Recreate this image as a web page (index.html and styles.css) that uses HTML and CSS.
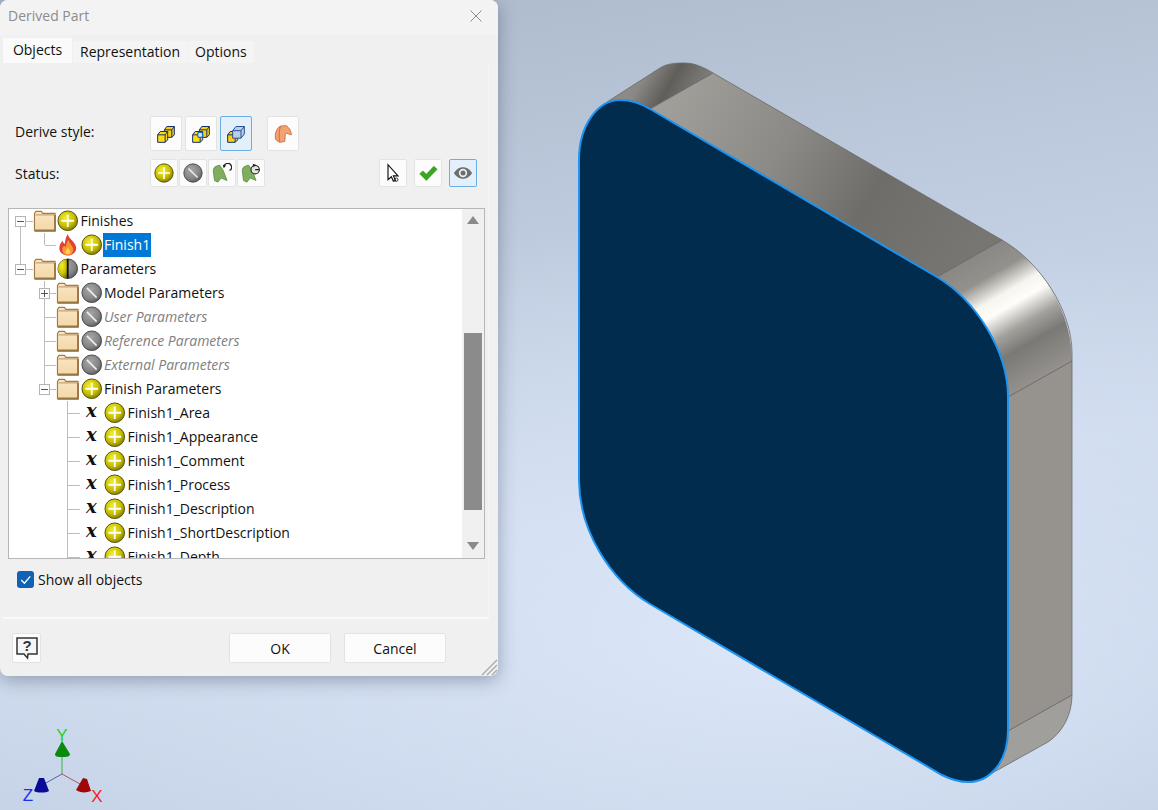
FILE: index.html
```html
<!DOCTYPE html>
<html lang="en">
<head>
<meta charset="utf-8">
<title>Derived Part</title>
<link rel="stylesheet" href="styles.css">
</head>
<body>
<svg class="defs" aria-hidden="true">
  <defs>
    <radialGradient id="gy" cx=".4" cy=".35" r=".75"><stop offset="0" stop-color="#f4ee30"/><stop offset=".55" stop-color="#c9c000"/><stop offset="1" stop-color="#6f6a00"/></radialGradient>
    <radialGradient id="gg" cx=".4" cy=".35" r=".75"><stop offset="0" stop-color="#a8a8a8"/><stop offset=".6" stop-color="#858585"/><stop offset="1" stop-color="#505050"/></radialGradient>
    <linearGradient id="fold" x1="0" y1="0" x2="0" y2="1"><stop offset="0" stop-color="#fae6c4"/><stop offset="1" stop-color="#f3d8a8"/></linearGradient>
    <symbol id="folder" viewBox="0 0 24 24">
      <path d="M1.5 21.5V4.5L3 2.5H8.5L10 4.5H22.5V21.5Z" fill="url(#fold)" stroke="#a57c48" stroke-width="1.2"/>
      <path d="M1.5 22.5H22.5V6" fill="none" stroke="#8f6836" stroke-width="1.5"/>
      <path d="M2.5 6H22" stroke="#b8925e" stroke-width="1"/>
    </symbol>
    <symbol id="plus" viewBox="0 0 24 24">
      <circle cx="12" cy="12" r="10" fill="url(#gy)" stroke="#55520a" stroke-width="1"/>
      <path d="M12 5.5V18.5M5.5 12H18.5" stroke="#fff" stroke-width="1.8"/>
    </symbol>
    <symbol id="none" viewBox="0 0 24 24">
      <circle cx="12" cy="12" r="10" fill="url(#gg)" stroke="#4a4a4a" stroke-width="1"/>
      <path d="M7 7L17 17" stroke="#eee" stroke-width="1.6"/>
    </symbol>
    <symbol id="half" viewBox="0 0 24 24">
      <circle cx="12" cy="12" r="10" fill="url(#gg)" stroke="#4a4a4a" stroke-width="1"/>
      <path d="M12 2A10 10 0 0 0 12 22Z" fill="url(#gy)"/>
      <path d="M12 2V22" stroke="#111" stroke-width="1.8"/>
    </symbol>
    <symbol id="flame" viewBox="0 0 24 24">
      <path d="M12 1C13 6 19 8 20.500 14C21.500 19 17 23 12 23C7 23 2.500 19 3.500 14C4 11 5.500 10 6.500 8C7.500 10 8 11 9 11C9.500 7 10 4 12 1Z" fill="#e0433a"/>
      <path d="M12.500 7C13.500 11 17.500 13 17.500 17C17.500 20.500 15 22.500 12 22.500C9 22.500 6.500 20.500 6.500 17C6.500 15 7.500 14 8.500 13C9 14 9.500 14.500 10 14.500C10.500 12 11 9.500 12.500 7Z" fill="#fb9a2c"/>
      <path d="M12 15C13 17 15 18 14.500 20C14 22 10 22 9.500 20C9.300 18.500 11 17 12 15Z" fill="#fdd060"/>
    </symbol>
    <symbol id="bent" viewBox="0 0 24 24">
      <path d="M3 21L1.500 9C1.500 7 3 4.500 5 4L9 2.500L13.500 9L18 21L11 18L7 23Z" fill="#7fae5f" stroke="#5f8c48" stroke-width="1"/>
    </symbol>
  </defs>
</svg>

<svg class="scene" viewBox="0 0 1158 810" aria-hidden="true">
  <defs>
    <linearGradient id="sTL" gradientUnits="userSpaceOnUse" x1="612" y1="80" x2="712" y2="138">
      <stop offset="0" stop-color="#908e89"/><stop offset=".22" stop-color="#8b8985"/><stop offset=".45" stop-color="#5f5e5b"/><stop offset=".75" stop-color="#84827e"/><stop offset="1" stop-color="#8b8985"/>
    </linearGradient>
    <linearGradient id="sTop" gradientUnits="userSpaceOnUse" x1="680" y1="90" x2="970" y2="258">
      <stop offset="0" stop-color="#a09e99"/><stop offset=".35" stop-color="#8c8a86"/><stop offset=".65" stop-color="#6f6d69"/><stop offset="1" stop-color="#787673"/>
    </linearGradient>
    <linearGradient id="sTR" gradientUnits="userSpaceOnUse" x1="970" y1="258" x2="1040" y2="379">
      <stop offset="0" stop-color="#8a8884"/><stop offset=".18" stop-color="#93918c"/><stop offset=".34" stop-color="#f7f5f0"/><stop offset=".44" stop-color="#fffdf9"/><stop offset=".6" stop-color="#a3a19c"/><stop offset=".74" stop-color="#7b7975"/><stop offset="1" stop-color="#95928e"/>
    </linearGradient>
  </defs>
  <path d="M607 102L660 68C668 63 677 63 685 63C695 63 705 68 713 73L650 109C636 100 620 97 607 102Z" fill="url(#sTL)"/>
  <path d="M650 109L713 73L1002 240L937 277Z" fill="url(#sTop)"/>
  <path d="M937 277L1002 240C1040 262 1072 310 1072 361L1008 397C1008 350 975 300 937 277Z" fill="url(#sTR)"/>
  <path d="M1008 397L1072 361V695L1008 731Z" fill="#96938f"/>
  <path d="M1008 731L1072 695C1072 715 1062 733 1048 742L985 777C1000 770 1008 750 1008 731Z" fill="#a19f9b"/>
  <path d="M607 102L660 68C668 63 677 63 685 63C695 63 705 68 713 73L1002 240C1040 262 1072 310 1072 353V695C1072 715 1062 733 1048 742L985 777" fill="none" stroke="#6a6966" stroke-width=".8"/>
  <path d="M650 109L713 73M937 277L1002 240M1008 397L1072 361M1008 731L1072 695" stroke="#656462" stroke-width=".9"/>
  <path d="M579 160C579 125 598 100 620 100C632 100 642 104 650 109L937 277C975 300 1008 350 1008 397V730C1008 762 990 782 968 782C958 782 950 779 942 775L650 604C610 580 579 530 579 480Z" fill="#012c4e" stroke="#1b94f2" stroke-width="2"/>
  <path d="M62 774V752" stroke="#3fae4a" stroke-width="1"/>
  <path d="M62 774L44 784" stroke="#5560b0" stroke-width="1"/>
  <path d="M62 774L80 784" stroke="#b05560" stroke-width="1"/>
  <path d="M62 741L70 754C70 757 66 757 62 757C58 757 55 757 55 754Z" fill="#0a8a0a"/>
  <path d="M39 778L44 778L49 791C46 793 37 793 34 791Z" fill="#0a0a96"/>
  <path d="M83 778L87 779L91 791C86 793 80 793 76 790Z" fill="#a00808"/>
  <text class="axis ax-y" x="62" y="741">Y</text>
  <text class="axis ax-z" x="28" y="801">Z</text>
  <text class="axis ax-x" x="97" y="802">X</text>
</svg>

<section class="dialog">
  <header class="titlebar">
    <h1 class="title">Derived Part</h1>
    <svg class="close" viewBox="0 0 12 12" aria-hidden="true"><path d="M.5 .5L11.500 11.500M11.500 .5L.5 11.500" stroke="#8a8a8a" stroke-width="1"/></svg>
  </header>
  <nav class="tabs">
    <span class="tab active">Objects</span>
    <span class="tab">Representation</span>
    <span class="tab">Options</span>
  </nav>
  <div class="panel">
    <div class="opt-row derive">
      <span class="opt-label">Derive style:</span>
      <div class="btns">
        <button class="tool big"><svg viewBox="0 0 24 24"><path d="M10 7L13 3H22V13L19 16H10Z" fill="#f6cf10" stroke="#1b2f6b" stroke-width="1.200"/><path d="M10 7H19V16M19 7L22 3" fill="none" stroke="#1b2f6b" stroke-width="1.200"/><path d="M2 13L5 9H14V19L11 22H2Z" fill="#fbdc14" stroke="#1b2f6b" stroke-width="1.200"/><path d="M2 13H11V22M11 13L14 9" fill="none" stroke="#1b2f6b" stroke-width="1.200"/></svg></button>
        <button class="tool big"><svg viewBox="0 0 24 24"><path d="M10 7L13 3H22V13L19 16H10Z" fill="#f6cf10" stroke="#1b2f6b" stroke-width="1.200"/><path d="M10 7H19V16M19 7L22 3" fill="none" stroke="#1b2f6b" stroke-width="1.200"/><path d="M2 13L5 9H14V19L11 22H2Z" fill="#fbdc14" stroke="#1b2f6b" stroke-width="1.200"/><path d="M2 13H11V22" fill="none" stroke="#1b2f6b" stroke-width="1.200"/><rect x="8" y="10" width="6" height="6" rx="2" fill="#cfe6fa" stroke="#1f6fc0" stroke-width="1.500"/></svg></button>
        <button class="tool big on"><svg viewBox="0 0 24 24"><path d="M2 13L5 9H14V19L11 22H2Z" fill="#f6cf10" stroke="#1b2f6b" stroke-width="1.200"/><path d="M2 13H11V22" fill="none" stroke="#1b2f6b" stroke-width="1.200"/><path d="M8 8L12 3H22V12L18 17H8Z" fill="#b9cfe8" stroke="#2b4f95" stroke-width="1.200"/><path d="M8 8H18V17M18 8L22 3" fill="none" stroke="#2b4f95" stroke-width="1.200"/></svg></button>
        <button class="tool big gap"><svg viewBox="0 0 24 24"><path d="M3 18C2 12 4 5 9 2.500L16 2C20 5 22 9 22 13L16 11C14 12 15 15 14 21L8 22C6 21 4 20 3 18Z" fill="#f5a273" stroke="#c0673a" stroke-width="1"/><path d="M9 3C7 8 7 15 8 21" fill="none" stroke="#c0673a" stroke-width="1"/></svg></button>
      </div>
    </div>
    <div class="opt-row status">
      <span class="opt-label">Status:</span>
      <div class="btns tight">
        <button class="tool"><svg class="s22"><use href="#plus"/></svg></button>
        <button class="tool"><svg class="s22"><use href="#none"/></svg></button>
        <button class="tool"><svg viewBox="0 0 24 24"><use href="#bent"/><path d="M13.500 8A4.500 4.500 0 1 1 20 12" fill="none" stroke="#222" stroke-width="1.500" transform="translate(1 -3)"/><path d="M13 2L17 3L14 6Z" fill="#222"/></svg></button>
        <button class="tool"><svg viewBox="0 0 24 24"><use href="#bent"/><circle cx="17" cy="8" r="5" fill="#dfe8d8" stroke="#222" stroke-width="1.300"/><path d="M17 8H22" stroke="#222" stroke-width="1.500"/><path d="M14 1L18 2L15 5Z" fill="#222"/></svg></button>
      </div>
      <div class="btns right">
        <button class="tool"><svg viewBox="0 0 24 24"><path d="M6 2V20L10 16.500L12.500 22L15 21L12.500 15.500H18Z" fill="#fff" stroke="#111" stroke-width="1.400"/><circle cx="16" cy="20" r="2" fill="none" stroke="#111" stroke-width="1"/></svg></button>
        <button class="tool gap"><svg viewBox="0 0 24 24"><path d="M2 13L6 9.500L10 13.500L19 4L23 7.500L10 21Z" fill="#3aa81c" stroke="#2c8614" stroke-width=".6"/></svg></button>
        <button class="tool on gap"><svg viewBox="0 0 24 24"><path d="M1 12C5 6 9 5 12 5C15 5 19 6 23 12C19 18 15 19 12 19C9 19 5 18 1 12Z" fill="#6e6e6e"/><circle cx="12" cy="12" r="5" fill="#e8f2fc"/><circle cx="12" cy="12" r="3" fill="#6e6e6e"/></svg></button>
      </div>
    </div>

    <div class="tree">
      <div class="tree-rows">
        <div class="row"><span class="twig start"><i class="exp minus"></i></span><svg class="ico"><use href="#folder"/></svg><svg class="ico"><use href="#plus"/></svg><span class="lbl">Finishes</span></div>
        <div class="row"><span class="twig pipe"></span><span class="twig end"></span><svg class="ico"><use href="#flame"/></svg><svg class="ico"><use href="#plus"/></svg><span class="lbl sel">Finish1</span></div>
        <div class="row"><span class="twig end"><i class="exp minus"></i></span><svg class="ico"><use href="#folder"/></svg><svg class="ico"><use href="#half"/></svg><span class="lbl">Parameters</span></div>
        <div class="row"><span class="twig"></span><span class="twig mid"><i class="exp cross"></i></span><svg class="ico"><use href="#folder"/></svg><svg class="ico"><use href="#none"/></svg><span class="lbl">Model Parameters</span></div>
        <div class="row"><span class="twig"></span><span class="twig mid"></span><svg class="ico"><use href="#folder"/></svg><svg class="ico"><use href="#none"/></svg><span class="lbl off">User Parameters</span></div>
        <div class="row"><span class="twig"></span><span class="twig mid"></span><svg class="ico"><use href="#folder"/></svg><svg class="ico"><use href="#none"/></svg><span class="lbl off">Reference Parameters</span></div>
        <div class="row"><span class="twig"></span><span class="twig mid"></span><svg class="ico"><use href="#folder"/></svg><svg class="ico"><use href="#none"/></svg><span class="lbl off">External Parameters</span></div>
        <div class="row"><span class="twig"></span><span class="twig end"><i class="exp minus"></i></span><svg class="ico"><use href="#folder"/></svg><svg class="ico"><use href="#plus"/></svg><span class="lbl">Finish Parameters</span></div>
        <div class="row"><span class="twig"></span><span class="twig"></span><span class="twig mid"></span><span class="xvar">x</span><svg class="ico"><use href="#plus"/></svg><span class="lbl">Finish1_Area</span></div>
        <div class="row"><span class="twig"></span><span class="twig"></span><span class="twig mid"></span><span class="xvar">x</span><svg class="ico"><use href="#plus"/></svg><span class="lbl">Finish1_Appearance</span></div>
        <div class="row"><span class="twig"></span><span class="twig"></span><span class="twig mid"></span><span class="xvar">x</span><svg class="ico"><use href="#plus"/></svg><span class="lbl">Finish1_Comment</span></div>
        <div class="row"><span class="twig"></span><span class="twig"></span><span class="twig mid"></span><span class="xvar">x</span><svg class="ico"><use href="#plus"/></svg><span class="lbl">Finish1_Process</span></div>
        <div class="row"><span class="twig"></span><span class="twig"></span><span class="twig mid"></span><span class="xvar">x</span><svg class="ico"><use href="#plus"/></svg><span class="lbl">Finish1_Description</span></div>
        <div class="row"><span class="twig"></span><span class="twig"></span><span class="twig mid"></span><span class="xvar">x</span><svg class="ico"><use href="#plus"/></svg><span class="lbl">Finish1_ShortDescription</span></div>
        <div class="row"><span class="twig"></span><span class="twig"></span><span class="twig mid"></span><span class="xvar">x</span><svg class="ico"><use href="#plus"/></svg><span class="lbl">Finish1_Depth</span></div>
      </div>
      <div class="scrollbar">
        <span class="arrow up"></span>
        <span class="thumb"></span>
        <span class="arrow down"></span>
      </div>
    </div>

    <label class="show-all">
      <span class="check"><svg viewBox="0 0 16 16"><path d="M4 8.500L7 11.500L12.500 5" fill="none" stroke="#fff" stroke-width="1.200"/></svg></span>
      <span>Show all objects</span>
    </label>
  </div>
  <footer class="footer">
    <button class="tool help"><svg viewBox="0 0 24 24"><path d="M2 2H22V18H13L12.500 22L9 18H2Z" fill="#f4f6f8" stroke="#333" stroke-width="1.500"/><text class="q" x="12" y="15">?</text></svg></button>
    <button class="cmd first">OK</button>
    <button class="cmd">Cancel</button>
  </footer>
  <svg class="grip" viewBox="0 0 18 18" aria-hidden="true"><path d="M2 17L17 2M7 17L17 7M12 17L17 12" stroke="#a8a8a8" stroke-width="1.300"/></svg>
</section>
</body>
</html>
```
FILE: styles.css
```css
* { box-sizing: border-box; }
html, body { margin: 0; height: 100%; }
body {
  width: 1158px;
  height: 810px;
  overflow: hidden;
  position: relative;
  font-family: "Open Sans", "Liberation Sans", sans-serif;
  font-size: 14px;
  color: #111;
  background:
    radial-gradient(ellipse 900px 420px at 760px 640px, #dbe6f8 0%, rgba(219,230,248,0) 100%),
    linear-gradient(170deg, #aab7c9 0%, #bcc9dc 30%, #cdd9ec 62%, #bccadf 100%);
}
.defs { position: absolute; width: 0; height: 0; }
.scene { position: absolute; left: 0; top: 0; width: 1158px; height: 810px; }
.axis { font-family: "Liberation Sans", sans-serif; font-size: 17px; text-anchor: middle; }
.ax-y { fill: #1fd32a; }
.ax-z { fill: #1f2ff0; }
.ax-x { fill: #f01f1f; }

.dialog {
  position: absolute;
  left: 0;
  top: 0;
  width: 498px;
  height: 676px;
  background: #f0f0f0;
  border-radius: 8px;
  box-shadow: 0 4px 18px rgba(30, 40, 60, .35);
  overflow: hidden;
  display: flex;
  flex-direction: column;
}
.titlebar {
  height: 35px;
  flex: none;
  background: #f3f3f3;
  display: flex;
  align-items: center;
  justify-content: space-between;
  padding: 0 16px 4px 8px;
}
.title { margin: 0; font-size: 14px; font-weight: 400; color: #8c8c8c; }
.close { width: 12px; height: 12px; }

.tabs { height: 28px; flex: none; display: flex; align-items: flex-end; padding-left: 3px; }
.tab {
  height: 22px;
  padding: 0 7px;
  margin-right: 1px;
  background: #f4f4f4;
  display: flex;
  align-items: center;
  line-height: 22px;
}
.tab.active { height: 25px; width: 69px; background: #fafafa; padding-bottom: 2px; justify-content: center; }

.panel {
  height: 556px;
  flex: none;
  margin: 0 9px 0 3px;
  padding: 53px 0 0 12px;
  background: #f0f0f0;
  border-right: 1px solid #f5f5f5;
  border-bottom: 2px solid #fafafa;
}
.opt-row { display: flex; align-items: center; }
.opt-label { width: 135px; flex: none; }
.derive { height: 35px; padding-bottom: 5px; }
.status { height: 28px; margin-top: 8px; padding-right: 11px; }
.btns { display: flex; gap: 3px; }
.btns.tight { gap: 1px; }
.btns.right { margin-left: auto; }
.gap { margin-left: 4px; }
.derive .gap { margin-left: 12px; }

.tool {
  width: 28px;
  height: 28px;
  padding: 0;
  background: #fcfcfc;
  border: 1px solid #e3e3e3;
  border-radius: 2px;
  display: flex;
  align-items: center;
  justify-content: center;
}
.tool svg { width: 20px; height: 20px; }
.tool svg.s22 { width: 22px; height: 22px; }
.tool.big { width: 32px; height: 35px; }
.derive .btns { align-self: flex-start; }
.tool.on { background: #e3effa; border-color: #69aee6; }

.tree {
  width: 477px;
  height: 351px;
  margin: 21px 0 0 -7px;
  background: #fff;
  border: 1px solid #b6b6b6;
  display: flex;
  overflow: hidden;
}
.tree-rows { flex: 1; min-width: 0; overflow: hidden; }
.row { height: 24px; display: flex; align-items: center; }
.twig {
  width: 23.5px;
  height: 24px;
  flex: none;
  display: flex;
  align-items: center;
  justify-content: center;
  background-repeat: no-repeat;
}
.twig.mid {
  background-image: linear-gradient(#bdbdbd, #bdbdbd), linear-gradient(#bdbdbd, #bdbdbd);
  background-position: center, right center;
  background-size: 1px 100%, 50% 1px;
}
.twig.end {
  background-image: linear-gradient(#bdbdbd, #bdbdbd), linear-gradient(#bdbdbd, #bdbdbd);
  background-position: center top, right center;
  background-size: 1px 50%, 50% 1px;
}
.twig.start {
  background-image: linear-gradient(#bdbdbd, #bdbdbd), linear-gradient(#bdbdbd, #bdbdbd);
  background-position: center bottom, right center;
  background-size: 1px 50%, 50% 1px;
}
.twig.pipe {
  background-image: linear-gradient(#bdbdbd, #bdbdbd);
  background-position: center;
  background-size: 1px 100%;
}
.exp {
  width: 11px;
  height: 11px;
  border: 1px solid #b4b4b4;
  background-color: #fff;
  background-repeat: no-repeat;
  background-position: center;
}
.exp.minus { background-image: linear-gradient(#555, #555); background-size: 7px 1px; }
.exp.cross {
  background-image: linear-gradient(#555, #555), linear-gradient(#555, #555);
  background-size: 7px 1px, 1px 7px;
}
.ico { width: 23.5px; height: 23.5px; flex: none; }
.xvar {
  width: 23.5px;
  flex: none;
  text-align: center;
  font-family: "DejaVu Serif", "Liberation Serif", serif;
  font-style: italic;
  font-weight: 700;
  font-size: 18px;
  line-height: 24px;
  margin-top: -4px;
}
.lbl { padding: 0 1px; line-height: 24px; white-space: nowrap; }
.lbl.sel { background: #0078d7; color: #fff; }
.lbl.off { color: #808080; font-style: italic; }

.scrollbar { width: 22px; flex: none; background: #f0f0f0; display: flex; flex-direction: column; align-items: center; }
.arrow { width: 0; height: 0; border-left: 6px solid transparent; border-right: 6px solid transparent; flex: none; }
.arrow.up { border-bottom: 8px solid #8a8a8a; margin-top: 7px; }
.arrow.down { border-top: 8px solid #8a8a8a; margin-bottom: 8px; }
.thumb { width: 18px; height: 177px; background: #8b8b8b; margin: 109px 0 32px; flex: none; }

.show-all { display: flex; align-items: center; gap: 4px; height: 18px; margin: 11px 0 0 2px; }
.check { width: 17px; height: 17px; background: #0f62b4; border-radius: 3px; display: flex; }
.check svg { width: 17px; height: 17px; }

.footer { height: 57px; flex: none; padding: 14px 0 0 12px; display: flex; align-items: flex-start; }
.help { width: 29px; height: 30px; margin-right: 188px; }
.help svg { width: 24px; height: 24px; }
.q { font-family: "Liberation Sans", sans-serif; font-weight: 700; font-size: 15px; text-anchor: middle; fill: #333; }
.cmd {
  width: 102px;
  height: 30px;
  margin-right: 13px;
  background: #fcfcfc;
  border: 1px solid #e3e3e3;
  border-radius: 2px;
  font: inherit;
  color: #111;
  padding: 0;
}
.grip { position: absolute; right: 0; bottom: 0; width: 18px; height: 18px; }
```
